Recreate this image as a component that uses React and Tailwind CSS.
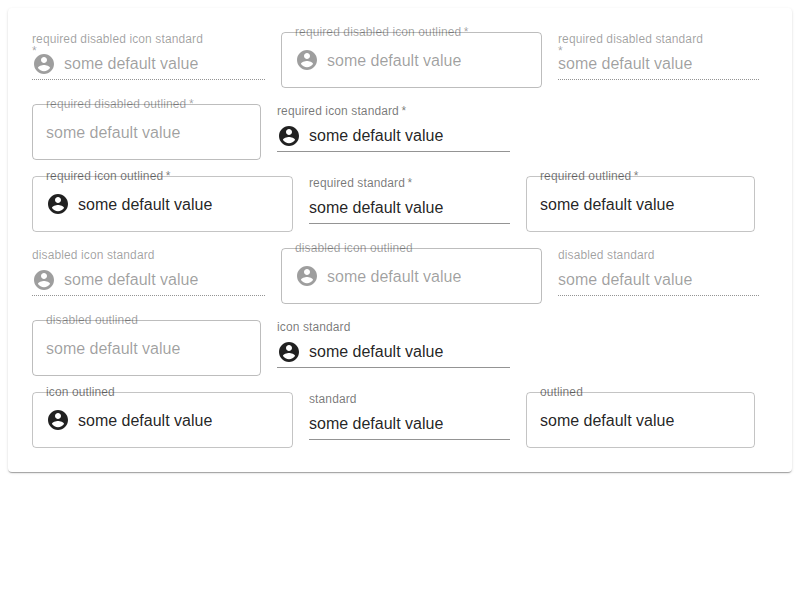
const ROWS = [
  [
    { label: "required disabled icon standard", required: true, disabled: true, icon: true },
    { label: "required disabled icon outlined", required: true, disabled: true, icon: true, outlined: true },
    { label: "required disabled standard", required: true, disabled: true },
  ],
  [
    { label: "required disabled outlined", required: true, disabled: true, outlined: true },
    { label: "required icon standard", required: true, icon: true },
  ],
  [
    { label: "required icon outlined", required: true, icon: true, outlined: true },
    { label: "required standard", required: true },
    { label: "required outlined", required: true, outlined: true },
  ],
  [
    { label: "disabled icon standard", disabled: true, icon: true },
    { label: "disabled icon outlined", disabled: true, icon: true, outlined: true },
    { label: "disabled standard", disabled: true },
  ],
  [
    { label: "disabled outlined", disabled: true, outlined: true },
    { label: "icon standard", icon: true },
  ],
  [
    { label: "icon outlined", icon: true, outlined: true },
    { label: "standard" },
    { label: "outlined", outlined: true },
  ],
];

function AccountCircle() {
  return (
    <svg className="mr-2 size-6 shrink-0 fill-current" viewBox="0 0 24 24" aria-hidden="true">
      <path d="M12 2C6.48 2 2 6.48 2 12s4.48 10 10 10 10-4.48 10-10S17.52 2 12 2zm0 3c1.66 0 3 1.34 3 3s-1.34 3-3 3-3-1.34-3-3 1.34-3 3-3zm0 14.2c-2.5 0-4.71-1.28-6-3.22.03-1.99 4-3.08 6-3.08 1.99 0 5.97 1.09 6 3.08-1.29 1.94-3.5 3.22-6 3.22z" />
    </svg>
  );
}

function TextField({ label, required, disabled, icon, outlined }) {
  const id = label.replaceAll(" ", "-");
  const labelColor = disabled ? "text-black/38" : "text-black/54";
  const labelPlace = outlined
    ? "[transform:translate(14px,-6px)_scale(0.75)]"
    : "[transform:translate(0,1.5px)_scale(0.75)]";
  const frame = outlined
    ? `h-14 rounded border px-[13px] ${disabled ? "border-black/26" : "border-black/23"}`
    : `mt-4 h-8 border-b border-black/42 ${disabled ? "border-dotted" : ""}`;

  return (
    <div className="relative">
      <div className={`flex items-center ${frame} ${disabled ? "text-black/38" : "text-black/87"}`}>
        {icon && <AccountCircle />}
        <input
          id={id}
          className="h-[19px] w-[201px] leading-[19px] outline-none"
          defaultValue="some default value"
          required={required}
          disabled={disabled}
        />
      </div>
      <label
        htmlFor={id}
        className={`absolute top-0 left-0 origin-top-left leading-none tracking-[0.00938em] ${labelPlace} ${labelColor}`}
      >
        {label}
        {required && <span>{"\u2009*"}</span>}
      </label>
    </div>
  );
}

export default function App() {
  return (
    <div className="p-2 font-['Liberation_Sans',Arial,sans-serif] text-base">
      <main className="flex flex-col gap-4 rounded bg-white p-6 shadow-[0_2px_1px_-1px_rgba(0,0,0,0.2),0_1px_1px_0_rgba(0,0,0,0.14),0_1px_3px_0_rgba(0,0,0,0.12)]">
        {ROWS.map((fields) => (
          <div key={fields[0].label} className="flex h-14 items-start gap-4">
            {fields.map((field) => (
              <TextField key={field.label} {...field} />
            ))}
          </div>
        ))}
      </main>
    </div>
  );
}
